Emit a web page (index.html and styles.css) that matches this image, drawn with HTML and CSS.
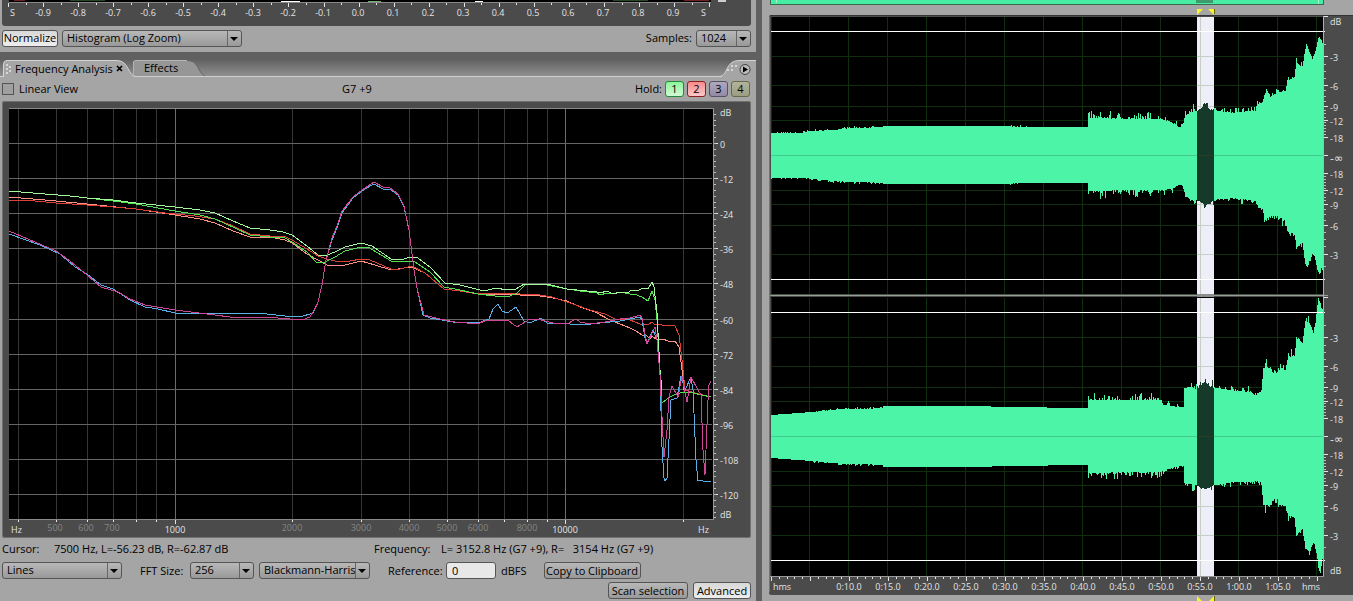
FILE: index.html
```
<!DOCTYPE html>
<html lang="en">
<head>
    <meta charset="UTF-8">
    <meta name="viewport" content="width=device-width, initial-scale=1.0">
    <title>Frequency Analysis</title>
    <link rel="stylesheet" href="styles.css">
</head>
<body>
<div class="workspace">

  <!-- Analysis panels -->
  <section class="left">
    <svg class="ruler" id="phaseRuler" viewBox="0 0 749 26"></svg>

    <div class="row histogram-row">
      <button type="button" class="btn on normalize">Normalize</button>
      <span class="drop histogram"><select aria-label="Display mode"><option>Histogram (Log Zoom)</option></select></span>
      <label class="push" for="samples">Samples:</label>
      <span class="drop samples"><select id="samples"><option>1024</option></select></span>
    </div>

    <div class="tabs">
      <button type="button" class="tab active">
        <svg class="tab-shape" viewBox="0 0 133 17"><path d="M.5 17V4Q.5 .5 4 .5H114C126 .5 125 16.500 133 16.500V17Z" fill="#a5a5a5"/><path d="M.5 17V4Q.5 .5 4 .5H114C126 .5 125 16.500 133 16.500" fill="none" stroke="#d4d4d4"/><path d="M3 4h2v2h-2zM6 6h2v2h-2zM3 8h2v2h-2zM6 10h2v2h-2zM3 12h2v2h-2z" fill="#d6d6d6"/></svg>
        <span>Frequency Analysis</span>
        <svg class="tab-close" viewBox="0 0 7 7"><path d="M1 1L6 6M6 1L1 6" stroke="#000" stroke-width="1.700"/></svg>
      </button>
      <button type="button" class="tab">
        <svg class="tab-shape" viewBox="0 0 72 17"><path d="M.5 17V3Q.5 1.500 3 1.500H54C66 1.500 64 13 72 17Z" fill="#969696"/><path d="M.5 17V3Q.5 1.500 3 1.500H54" fill="none" stroke="#b4b4b4"/><path d="M54 1.500C66 1.500 64 13 72 17" fill="none" stroke="#666"/></svg>
        <span>Effects</span>
      </button>
      <button type="button" class="panel-menu" aria-label="Panel menu">
        <svg viewBox="0 0 36 18"><path d="M0 18C8 18 5 1.500 19 1.500H36V18Z" fill="#a5a5a5"/><path d="M0 17.500C8 17 5 1.500 19 1.500H36" fill="none" stroke="#d4d4d4"/><path d="M11 6h2v2h-2zM15 6h2v2h-2zM7 10h2v2h-2zM11 10h2v2h-2z" fill="#d6d6d6"/><circle cx="25" cy="10.500" r="5" fill="#bbb" stroke="#444"/><path d="M23 7.500L28 10.500L23 13.500Z" fill="#000"/></svg>
      </button>
    </div>

    <div class="row view-row">
      <label class="check"><input type="checkbox">Linear View</label>
      <output class="note">G7 +9</output>
      <span class="push">Hold:</span>
      <button type="button" class="hold green">1</button>
      <button type="button" class="hold red">2</button>
      <button type="button" class="hold violet">3</button>
      <button type="button" class="hold olive">4</button>
    </div>

    <div class="frame">
      <svg id="spectrum" viewBox="2 101 749 437" role="img" aria-label="Frequency spectrum"></svg>
    </div>

    <div class="info">
      <span>Cursor:</span><span>7500 Hz, L=-56.23 dB, R=-62.87 dB</span>
      <span>Frequency:</span><span>L= 3152.8 Hz (G7 +9), R=&nbsp;&nbsp; 3154 Hz (G7 +9)</span>
    </div>

    <div class="row options">
      <span class="drop lines"><select aria-label="Graph style"><option>Lines</option></select></span>
      <label class="fft-label" for="fft">FFT Size:</label>
      <span class="drop fft"><select id="fft"><option>256</option></select></span>
      <span class="drop window-type"><select aria-label="Window function"><option>Blackmann-Harris</option></select></span>
      <label class="ref-label" for="reference">Reference:</label>
      <input class="reference" id="reference" type="text" value="0">
      <span>dBFS</span>
      <button type="button" class="btn copy">Copy to Clipboard</button>
    </div>
    <div class="row actions">
      <button type="button" class="btn push scan">Scan selection</button>
      <button type="button" class="btn on advanced">Advanced</button>
    </div>
  </section>

  <!-- Waveform editor -->
  <section class="right">
    <svg id="wave" viewBox="769 0 584 601" role="img" aria-label="Stereo waveform"></svg>
  </section>
</div>
<script src="script.js"></script>
</body>
</html>
```
FILE: styles.css
```
* {
    box-sizing: border-box;
}
body {
    margin: 0;
    background-color: #606060;
    font-family: "Open Sans", "Noto Sans", sans-serif;
    font-size: 11px;
    line-height: 16px;
    color: #000;
}
button, select, input {
    font: inherit;
    color: inherit;
    margin: 0;
}
svg {
    display: block;
    width: 100%;
}
svg text {
    font-size: 9px;
    fill: #e4e4e4;
}
svg text.dim {
    fill: #858585;
}
svg text.inf {
    font-family: "DejaVu Sans", sans-serif;
    font-size: 11px;
}
.workspace {
    display: grid;
    grid-template-columns: 756fr 6px 591fr;
    min-height: 100vh;
}
.left, .right {
    background-color: #a5a5a5;
    min-width: 0;
}
.left {
    padding: 0 5px 0 2px;
}
.right {
    grid-column: 3;
    padding-left: 7px;
}
.row {
    display: flex;
    align-items: center;
    gap: 5px;
    white-space: nowrap;
}
.push {
    margin-left: auto;
}
.histogram-row {
    gap: 4px;
    height: 26px;
    padding-bottom: 2px;
}
.btn {
    height: 17px;
    padding: 0;
    line-height: 14px;
    text-align: center;
    white-space: nowrap;
    border: 1px solid #555;
    border-radius: 3px;
    background: linear-gradient(#b8b8b8, #999);
}
.btn.on {
    background: linear-gradient(#d8d8d8, #eee);
}
.normalize { width: 56px; }
.copy { width: 97px; margin-left: 12px; }
.scan { width: 80px; }
.advanced { width: 58px; }
.drop {
    position: relative;
    height: 17px;
}
.drop select {
    appearance: none;
    display: block;
    width: 100%;
    height: 17px;
    padding: 0 14px 1px 4px;
    line-height: 14px;
    border: 1px solid #555;
    border-radius: 3px;
    background: linear-gradient(#b8b8b8, #999);
}
.drop::before {
    content: "";
    position: absolute;
    right: 14px;
    top: 1px;
    bottom: 1px;
    border-left: 1px solid #666;
    pointer-events: none;
}
.drop::after {
    content: "";
    position: absolute;
    right: 4px;
    top: 7px;
    border: 4px solid transparent;
    border-top-color: #000;
    border-bottom: 0;
    pointer-events: none;
}
.histogram { width: 180px; }
.samples { width: 55px; }
.lines { width: 120px; }
.fft { width: 64px; }
.window-type { width: 111px; }
.fft-label {
    width: 45px;
    margin-left: 13px;
}
.ref-label {
    width: 53px;
    margin-left: 13px;
}
.reference {
    width: 50px;
    height: 17px;
    padding: 0 5px;
    border: 1px solid #555;
    border-radius: 3px;
    background-color: #e8e8e8;
}

/* Tabs */
.tabs {
    display: flex;
    align-items: flex-end;
    height: 25px;
    margin: 0 -5px 0 -2px;
    padding-left: 3px;
    border-bottom: 1px solid #d0d0d0;
    background: linear-gradient(#606060 30%, #909090);
}
.tab {
    position: relative;
    display: flex;
    align-items: center;
    width: 72px;
    height: 17px;
    margin-left: -3px;
    padding: 0 0 1px 11px;
    border: 0;
    background: none;
    line-height: 15px;
}
.tab.active {
    z-index: 1;
    width: 133px;
    margin: 0 0 -1px;
    padding: 0 0 0 12px;
}
.tab-shape {
    position: absolute;
    left: 0;
    top: 0;
    height: 17px;
}
.tab span {
    position: relative;
}
.tab-close {
    position: relative;
    width: 7px;
    margin-left: 3px;
}
.panel-menu {
    width: 36px;
    margin: 0 0 -1px auto;
    padding: 0;
    border: 0;
    background: none;
}

.view-row {
    display: grid;
    grid-template-columns: 337px 1fr auto auto auto auto auto;
    gap: 3px;
    height: 24px;
    padding-right: 1px;
}
.check {
    display: flex;
    align-items: center;
    gap: 5px;
}
.check input {
    appearance: none;
    width: 12px;
    height: 12px;
    border: 1px solid #555;
    background-color: #a0a0a0;
}
.hold {
    width: 19px;
    height: 16px;
    padding: 0;
    line-height: 14px;
    border: 1px solid;
    border-radius: 3px;
}
.hold.green { border-color: #258a35; background: linear-gradient(#8cf59a, #d0fad4); }
.hold.red { border-color: #902020; background: linear-gradient(#f98a8a, #fcc8c8); }
.hold.violet { border-color: #565068; background: linear-gradient(#aea8be, #928aa6); }
.hold.olive { border-color: #68684c; background: linear-gradient(#b2b49a, #9c9e80); }

.frame {
    border-radius: 3px;
    background-color: #4b4b4b;
    box-shadow: inset 0 0 0 1px #707070;
}
.ruler {
    border-radius: 0 0 3px 3px;
    background-color: #4b4b4b;
}
.info {
    display: grid;
    grid-template-columns: 52px 320px 67px 1fr;
    height: 24px;
    line-height: 22px;
    white-space: nowrap;
}
.options {
    height: 17px;
}
.actions {
    height: 17px;
    margin: 3px 0 2px;
}
```
FILE: script.js
```
function line(x1, y1, x2, y2, color) {
    return `<path d="M${x1} ${y1}L${x2} ${y2}" stroke="${color}" shape-rendering="crispEdges"/>`;
}
function rect(x, y, w, h, color) {
    return `<rect x="${x}" y="${y}" width="${w}" height="${h}" fill="${color}" shape-rendering="crispEdges"/>`;
}
function text(x, y, s, anchor, cls) {
    return `<text x="${x}" y="${y}" text-anchor="${anchor || "start"}" class="${cls || ""}">${s}</text>`;
}

// Phase ruler
function drawRuler() {
    let out = rect(7, 0, 702, 2, "#000") + rect(12, 0, 11, 1, "#702020") + rect(68, 0, 35, 1, "#244a24");
    out += rect(279, 1, 19, 1, "#fff") + rect(473, 1, 8, 1, "#fff") + rect(366, 1, 13, 1, "#70b070");
    out += rect(611, 0, 35, 1, "#244a24") + rect(682, 0, 25, 1, "#702020") + rect(716, 0, 8, 2, "#ccc") + line(7, 2.5, 709, 2.5, "#888");
    for (let i = 0; i <= 40; i++) {
        let x = Math.round(6 + i * 17.53) + 0.5;
        out += line(x, 3, x, i % 2 ? 5 : 7, "#e4e4e4");
    }
    for (let i = -9; i <= 9; i++) {
        out += text(Math.round(356 + i * 35), 16, (i / 10).toFixed(1), "middle");
    }
    out += text(8, 16, "S") + text(699, 16, "S");
    document.getElementById("phaseRuler").innerHTML = out;
}

// Spectrum curves, newest drawn last
const curves = [
    ["#ff9282", "9,197 45,200 87,204 136,209 175,215 200,219 215,223 233,231 250,237 270,237 285,240 292,243 307,254 318,260 327,265 345,265 361,261 375,265 391,270 411,267 425,273 444,289 460,291 478,294 520,295 540,296 553,298 567,301 580,307 595,312 610,320 620,324 630,328 636,331 642,335 647,336 650,339 652,336 656,339 663,339 668,341 675,341 679,347 682,370 684,390 695,393 711,397"],
    ["#dc4038", "9,200 35,201 56,203 87,205 113,207 136,209 165,213 195,216 215,219 233,226 250,234 270,236 286,237 292,240 307,249 318,256 327,259 335,261 350,261 361,259 370,260 391,269 400,269 412,266 425,273 444,289 460,291 478,294 500,293 540,295 552,297 570,303 590,310 605,314 615,319 630,320 640,324 648,325 652,322 655,325 659,324 665,326 671,325 675,326 679,335 682,360 685,390 695,393 711,397"],
    ["#50e050", "9,191 45,194 70,196 87,198 113,201 136,204 175,211 200,215 215,219 235,228 250,235 270,237 285,238 292,242 307,252 316,262 325,262 335,257 345,251 361,247 368,247 391,261 415,262 430,272 444,287 460,290 478,294 495,296 510,296 517,293 525,285 535,284 547,285 567,289 580,291 597,293 600,295 607,293 613,294 620,292 630,294 634,294 642,297 648,301 652,291 655,300 657,320 660,370 662,403 670,397 676,394 684,392 693,393 711,397"],
    ["#a4f89c", "9,191 45,194 70,196 87,198 113,200 136,203 175,207 200,210 215,213 233,221 250,228 270,230 283,232 292,235 307,246 318,255 327,255 335,252 345,247 361,243 372,246 391,259 404,259 410,257 418,258 430,267 445,283 460,285 480,290 488,290 496,288 507,290 516,289 524,284 533,284 547,284 567,289 587,291 597,292 600,293 607,291 613,294 620,292 627,293 632,290 637,291 643,288 648,289 652,282 654,287 657,313 660,370 662,390"],
    ["#5aaee6", "9,234 40,245 60,254 75,267 87,274 101,285 113,289 130,300 145,307 158,309 175,313 258,313 285,316 300,317 313,313 318,302 322,285 326,260 332,240 337,228 342,213 353,198 365,189 374,184 383,189 390,189 398,195 404,207 409,230 414,270 417,288 423,315 430,318 453,322 478,323 489,319 493,309 498,304 502,311 507,313 512,310 516,307 520,314 524,321 530,323 541,318 547,323 570,324 583,325 600,323 620,321 640,317 642,320 645,338 647,343 653,330 657,340 660,373 662,447 664,478 665,481 667,478 671,400 677,398 681,376 685,390 691,377 693,390 696,460 698,481 700,480 703,481 711,481"],
    ["#d04696", "9,231 56,251 70,261 87,275 101,287 118,292 130,299 145,305 175,310 215,315 230,317 265,317 290,319 302,320 310,317 316,307 318,302 322,285 326,260 332,238 337,226 342,211 353,197 365,188 374,182 383,187 390,188 398,194 404,206 409,230 414,270 417,288 424,315 440,319 455,322 478,324 487,320 509,321 517,327 525,322 530,319 541,320 553,323 567,324 576,319 580,322 590,324 605,322 620,319 630,318 640,315 642,318 647,344 655,327 657,340 660,375 664,457 667,430 669,397 672,386 678,397 682,376 687,402 691,377 698,390 701,395 703,450 705,475 708,400 709,385 711,381"]
];

function drawSpectrum() {
    let out = rect(9, 109, 704, 410, "#000");
    for (let x of [18, 56, 87, 113, 136, 156, 175, 292, 361, 409, 447, 478, 504, 527, 547, 565, 683]) {
        let major = x == 175 || x == 565;
        out += line(x + 0.5, 109, x + 0.5, 519, major ? "#6c6c6c" : "#363636");
        out += line(x + 0.5, 520, x + 0.5, major ? 524 : 522, "#e4e4e4");
    }
    for (let i = 0; i <= 10; i++) {
        let y = Math.round(143 + i * 35.1) + 0.5;
        out += line(9, y, 712, y, "#646464") + line(713, y, 718, y, "#e4e4e4");
        out += text(720, y + 4, i ? -12 * i : 0);
    }
    for (let i = -5; i < 65; i++) {
        let y = Math.round(143 + i * 5.85) + 0.5;
        if (y < 519) out += line(714, y, 716, y, "#c0c0c0");
    }
    for (const [color, points] of curves) {
        out += `<polyline points="${points}" fill="none" stroke="${color}" shape-rendering="crispEdges"/>`;
    }
    out += line(9, 108.5, 714, 108.5, "#888") + line(713.5, 109, 713.5, 519, "#999") + line(9, 519.5, 714, 519.5, "#888");
    out += text(720, 116, "dB") + text(720, 518, "dB") + text(11, 533, "Hz") + text(698, 533, "Hz");
    out += text(175, 533, "1000", "middle") + text(565, 533, "10000", "middle");
    const dim = { 500: 55, 600: 86, 700: 112, 2000: 292, 3000: 361, 4000: 409, 5000: 447, 6000: 478, 8000: 527 };
    for (const f in dim) {
        out += text(dim[f], 531, f, "middle", "dim");
    }
    document.getElementById("spectrum").innerHTML = out;
}

// Envelopes: x, top, bottom, jitter
const channels = [
    { mid: 155, env: [[771,133,178,1],[800,133,178,1],[811,131,179,1],[830,130,181,1],[850,128,182,1],[882,127,183,0],[883,126,184,0],[1007,126,184,1],[1030,127,183,0],[1087,127,183,0],[1088,117,192,4],[1160,118,191,3],[1170,121,190,3],[1180,127,185,1],[1183,122,187,2],[1185,115,197,3],[1193,110,201,4],[1197,110,201,3],[1205,104,206,3],[1210,109,204,3],[1214,110,200,2],[1230,112,199,3],[1243,111,200,3],[1255,110,202,3],[1257,104,206,2],[1262,102,210,2],[1264,94,218,3],[1267,92,219,4],[1270,97,217,3],[1277,91,217,4],[1285,90,222,3],[1287,80,232,2],[1294,77,234,3],[1296,61,248,3],[1302,67,243,2],[1305,48,264,3],[1307,47,266,2],[1312,58,254,2],[1314,54,257,3],[1317,42,270,2],[1319,36,275,2],[1321,41,268,2],[1323,50,265,1]] },
    { mid: 436, env: [[771,415,458,0],[811,412,461,1],[840,409,464,1],[882,408,465,0],[883,406,467,0],[975,406,467,0],[1007,407,466,0],[1087,408,465,0],[1088,399,474,4],[1160,399,473,3],[1163,404,471,3],[1170,405,469,2],[1180,407,466,1],[1183,407,466,0],[1184,388,484,2],[1190,386,485,4],[1197,388,486,2],[1205,381,490,3],[1210,386,488,4],[1214,387,486,2],[1230,390,483,3],[1250,391,483,3],[1255,395,481,2],[1261,391,483,2],[1263,367,507,6],[1270,366,506,3],[1273,373,500,2],[1277,373,500,4],[1280,366,506,4],[1285,369,507,2],[1288,355,517,4],[1294,356,518,2],[1296,338,536,2],[1302,342,530,2],[1304,328,542,3],[1305,320,549,5],[1309,322,553,3],[1313,332,543,2],[1315,322,547,3],[1317,308,560,2],[1318,298,568,0],[1320,303,573,1],[1321,308,566,1],[1323,309,552,1]] }
];

let seed = 7;
function random() {
    seed = (seed * 16807) % 2147483647;
    return seed / 2147483647;
}

function envelopePath(ch) {
    let top = "", bottom = "", k = 0;
    for (let x = 771; x < 1324; x++) {
        while (k < ch.env.length - 2 && x >= ch.env[k + 1][0]) k++;
        let a = ch.env[k], b = ch.env[k + 1];
        let t = Math.min(1, (x - a[0]) / (b[0] - a[0]));
        // mostly small steps with an occasional spike
        let up = Math.pow(random(), 4) * a[3] * 2 - a[3] * 0.3;
        let down = Math.pow(random(), 4) * a[3] * 2 - a[3] * 0.3;
        let y1 = Math.round(a[1] + (b[1] - a[1]) * t - up);
        let y2 = Math.round(a[2] + (b[2] - a[2]) * t + down);
        top += `L${x} ${y1}H${x + 1}`;
        bottom = `L${x + 1} ${y2}H${x}` + bottom;
    }
    return "M771 " + ch.mid + top + bottom + "Z";
}

function drawWave() {
    let out = `<clipPath id="sel"><rect x="1197" y="16" width="17" height="560"/></clipPath>`;
    // overview strip
    out += rect(770, 0, 554, 5, "#3a6a50") + rect(771, 0, 552, 4, "#46eda2") + rect(776, 0, 1, 3, "#a0f8d0") + rect(1196, 0, 17, 3, "#3f9a70") + rect(1318, 0, 1, 4, "#a0f8d0");
    out += `<path d="M771 15H1353V595H771Q769 595 769 592V17Q769 15 771 15Z" fill="#4b4b4b"/>`;
    out += line(770, 15.5, 1353, 15.5, "#333") + line(769.5, 17, 769.5, 592, "#6c7a6c");
    out += rect(771, 17, 553, 559, "#000");
    for (let n = 0; n < 2; n++) {
        let ch = channels[n], mid = ch.mid;
        let y0 = n ? 298 : 17, y1 = n ? 576 : 294;
        let path = envelopePath(ch);
        let grid = "", light = rect(1197, y0, 17, y1 - y0, "#eeeef8");
        for (let i = 0; i <= 14; i++) {
            let x = (i ? 771 : 771) + i * 39 + 0.5 - (i ? 1 : 0);
            grid += line(x, y0, x, y1, "#0e2e0e");
        }
        light += line(1200.5, y0, 1200.5, y1, "#c6cec6");
        for (let d of [-99, -70, -49, -35, 35, 49, 70, 99]) {
            grid += line(771, mid + d + 0.5, 1323, mid + d + 0.5, "#0e2e0e");
            light += line(1197, mid + d + 0.5, 1214, mid + d + 0.5, "#c6cec6");
        }
        out += grid + `<path d="${path}" fill="#4cf4a8" shape-rendering="crispEdges"/>`;
        out += light + `<path d="${path}" fill="#163a2a" clip-path="url(#sel)" shape-rendering="crispEdges"/>`;
        out += line(771, mid + 0.5, 1323, mid + 0.5, "#43cb8c") + line(1197, mid + 0.5, 1214, mid + 0.5, "#2c3a28");
        for (let d of [-124, 124]) {
            out += line(771, mid + d + 0.5, 1325, mid + d + 0.5, "#fff");
        }
        for (let [d, label] of [[0, "-∞"], [18, -18], [35, -12], [49, -9], [70, -6], [99, -3]]) {
            for (let s of d ? [-1, 1] : [1]) {
                out += line(1324, mid + s * d + 0.5, 1328, mid + s * d + 0.5, "#e4e4e4");
                out += text(1330, mid + s * d + (d ? 5 : 7), label, "start", d ? "" : "inf");
            }
        }
        for (let d of [21, 24, 27, 30, 33, 38, 42, 45, 54, 59, 65, 77, 84, 91, 111]) {
            out += line(1324, mid - d + 0.5, 1326, mid - d + 0.5, "#c0c0c0") + line(1324, mid + d + 0.5, 1326, mid + d + 0.5, "#c0c0c0");
        }
        out += line(1324, y0 - 0.5, 1328, y0 - 0.5, "#e4e4e4");
    }
    out += rect(770, 294, 554, 3, "#4b4b4b") + line(770, 295.5, 1328, 295.5, "#93a193") + rect(1197, 294, 17, 3, "#8c8c8c");
    out += line(1323.5, 16, 1323.5, 576, "#a8b4a8") + line(770, 576.5, 1324, 576.5, "#999");
    for (let i = 0; i <= 70; i++) {
        let x = Math.round(771 + i * 7.8) + 0.5;
        out += line(x, 577, x, i % 5 ? 579 : 581, "#e4e4e4");
    }
    for (let i = 2; i <= 13; i++) {
        let s = i * 5;
        let time = Math.floor(s / 60) + ":" + String(s % 60).padStart(2, "0") + ".0";
        out += text(771 + i * 39, 590, time, "middle");
    }
    out += text(773, 590, "hms") + text(1302, 590, "hms") + text(1330, 25, "dB") + text(1330, 574, "dB");
    // selection handles
    out += `<path d="M1197 9h6l-6 6zM1214 9h-6l6 6zM1197 596v5h5zM1214 596v5h-5z" fill="#f6f62a"/>`;
    out += line(1214.5, 9, 1214.5, 14, "#666600") + line(1214.5, 596, 1214.5, 601, "#666600");
    document.getElementById("wave").innerHTML = out;
}

drawRuler();
drawSpectrum();
drawWave();
```
